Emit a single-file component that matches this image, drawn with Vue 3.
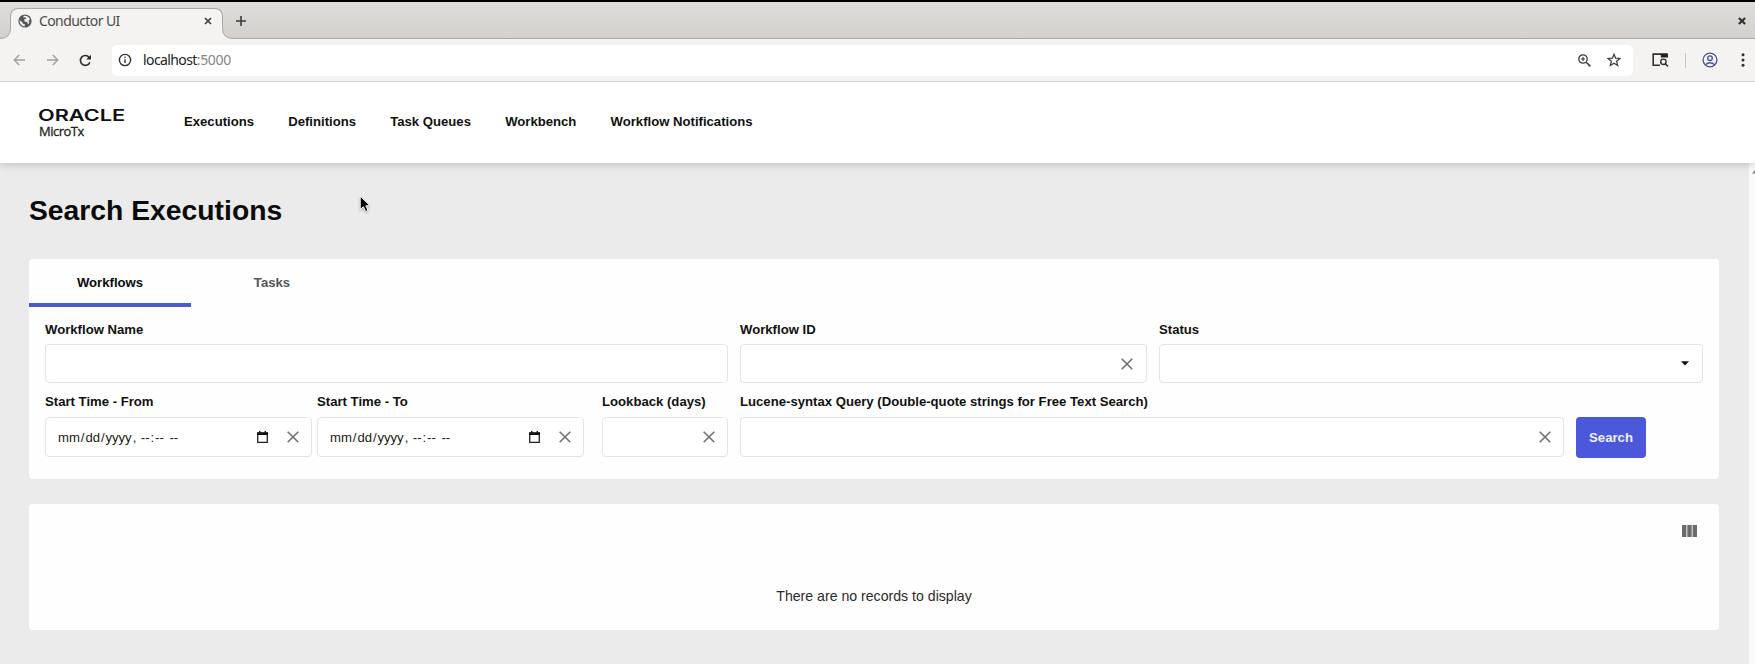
<script setup>
const navItems = ['Executions', 'Definitions', 'Task Queues', 'Workbench', 'Workflow Notifications']
const dateParts = ['mm', '/', 'dd', '/', 'yyyy', ', ', '--', ':', '--', ' ', '--']
const isField = (p) => /[mdy-]/.test(p)
const dateFields = [
  { id: 'from', label: 'Start Time - From' },
  { id: 'to', label: 'Start Time - To' },
]
</script>

<template>
  <div class="window">
    <div class="tabstrip">
      <div class="browser-tab">
        <svg class="globe" width="14" height="14" viewBox="0 0 14 14">
          <circle cx="7" cy="7" r="6.6" fill="#54575a" />
          <path d="M1.6 6.2 L4.3 8.3 L5 9.7 L6.8 10 L6.6 12.4 C3.6 12.2 1.4 9.6 1.6 6.2Z" fill="#f1f0ef" />
          <path d="M5.4 1.8 C8.4 1.2 11 2.6 12 5 L10.6 6.8 L11.4 8.4 L10 10.4 L9.2 8 L6.6 7.4 L6.2 5.6 L8.2 4.4 L7.4 3.2 L5.6 3.4Z" fill="#f1f0ef" />
        </svg>
        <span class="tab-title">Conductor UI</span>
        <svg class="tab-close" width="8" height="8" viewBox="0 0 8 8"><path d="M1 1 L7 7 M7 1 L1 7" stroke="#3f3f3f" stroke-width="1.7" /></svg>
      </div>
      <svg class="tab-curve left" width="11" height="11" viewBox="0 0 11 11"><path d="M0 11 V10.5 Q10.5 10.5 10.5 0 H11 V11Z" fill="#f4f3f2" /><path d="M0 10.5 Q10.5 10.5 10.5 0" fill="none" stroke="#aaa7a4" /></svg>
      <svg class="tab-curve right" width="11" height="11" viewBox="0 0 11 11"><path d="M11 11 V10.5 Q.5 10.5 .5 0 H0 V11Z" fill="#f4f3f2" /><path d="M11 10.5 Q.5 10.5 .5 0" fill="none" stroke="#aaa7a4" /></svg>
      <svg class="new-tab" width="10" height="10" viewBox="0 0 10 10"><path d="M5 0 V10 M0 5 H10" stroke="#3c3c3c" stroke-width="1.6" /></svg>
      <svg class="win-close" width="8" height="8" viewBox="0 0 8 8"><path d="M.9 .9 L7.1 7.1 M7.1 .9 L.9 7.1" stroke="#303030" stroke-width="2.1" /></svg>
    </div>

    <div class="toolbar">
      <div class="nav-buttons">
        <svg width="13" height="12" viewBox="0 0 13 12"><path d="M12 6 H1.5 M6.3 1 L1.3 6 L6.3 11" fill="none" stroke="#a09e9c" stroke-width="1.4" /></svg>
        <svg width="13" height="12" viewBox="0 0 13 12"><path d="M1 6 H11.5 M6.7 1 L11.7 6 L6.7 11" fill="none" stroke="#a09e9c" stroke-width="1.4" /></svg>
        <svg width="13" height="13" viewBox="0 0 13 13"><path d="M10.9 8.2 A4.9 4.9 0 1 1 10.2 3.4" fill="none" stroke="#2d2d2d" stroke-width="1.6" /><path d="M12 .8 V5.6 H7.2Z" fill="#2d2d2d" /></svg>
      </div>
      <div class="omnibox">
        <svg width="14" height="14" viewBox="0 0 14 14"><circle cx="7" cy="7" r="5.6" fill="none" stroke="#333" stroke-width="1.4" /><path d="M7 6.2 V10 M7 3.8 V5.1" stroke="#333" stroke-width="1.4" /></svg>
        <span class="url">localhost<span class="port">:5000</span></span>
        <svg class="magnifier" width="13" height="13" viewBox="0 0 13 13"><circle cx="5" cy="5" r="4.2" fill="none" stroke="#3c3c3c" stroke-width="1.3" /><path d="M8.2 8.2 L12.4 12.4" stroke="#3c3c3c" stroke-width="1.6" /><path d="M5 3 V7 M3 5 H7" stroke="#3c3c3c" stroke-width="1.2" /></svg>
        <svg width="14" height="14" viewBox="0 0 14 14"><path d="M7 1.3 L8.6 5.2 L12.9 5.5 L9.6 8.3 L10.7 12.5 L7 10.2 L3.3 12.5 L4.4 8.3 L1.1 5.5 L5.4 5.2Z" fill="none" stroke="#3c3c3c" stroke-width="1.25" /></svg>
      </div>
      <svg class="tab-search" width="17" height="14" viewBox="0 0 17 14"><path d="M8 12.2 H1.2 V1.1 H9" fill="none" stroke="#303030" stroke-width="1.6" /><path d="M8.8 .3 H15 Q16 .3 16 1.3 V4.4 H8.8Z" fill="#222" /><circle cx="11.4" cy="8.8" r="2.7" fill="none" stroke="#303030" stroke-width="1.4" /><path d="M13.3 10.7 L16 13.4" stroke="#303030" stroke-width="1.5" /></svg>
      <i class="divider"></i>
      <svg class="profile" width="16" height="16" viewBox="0 0 16 16"><g fill="none" stroke="#4a5299" stroke-width="1.35"><circle cx="8" cy="8" r="6.9" /><circle cx="8" cy="6.2" r="2.3" /><path d="M3.3 12.7 Q8 8.8 12.7 12.7" /></g></svg>
      <svg class="dots" width="4" height="14" viewBox="0 0 4 14"><g fill="#303030"><circle cx="2" cy="1.8" r="1.5" /><circle cx="2" cy="7" r="1.5" /><circle cx="2" cy="12.2" r="1.5" /></g></svg>
    </div>

    <header class="app-header">
      <div class="brand">
        <svg class="logo" width="92" height="20" viewBox="0 0 92 20"><text x="0" y="16.2" textLength="87" lengthAdjust="spacingAndGlyphs" class="oracle">ORACLE</text></svg>
        <span class="product">MicroTx</span>
      </div>
      <nav class="menu">
        <a v-for="item in navItems" :key="item">{{ item }}</a>
      </nav>
    </header>

    <div class="viewport">
      <main class="content">
        <h1>Search Executions</h1>

        <section class="panel search-panel">
          <div class="tabs">
            <div class="tab active">Workflows</div>
            <div class="tab">Tasks</div>
          </div>
          <div class="form-row">
            <div class="field name"><label>Workflow Name</label><div class="box"></div></div>
            <div class="field wf-id">
              <label>Workflow ID</label>
              <div class="box"><svg class="clear" width="12" height="12" viewBox="0 0 12 12"><path d="M.7 .7 L11.3 11.3 M11.3 .7 L.7 11.3" /></svg></div>
            </div>
            <div class="field status">
              <label>Status</label>
              <div class="box"><svg class="caret" width="8" height="5" viewBox="0 0 8 5"><path d="M0 .3 H8 L4 4.6Z" fill="#111" /></svg></div>
            </div>
          </div>
          <div class="form-row second">
            <div v-for="f in dateFields" :key="f.id" class="field date" :class="f.id">
              <label>{{ f.label }}</label>
              <div class="box">
                <span class="date-text"><span v-for="(p, i) in dateParts" :key="i" :class="{ part: isField(p) }">{{ p }}</span></span>
                <svg class="calendar" width="11" height="12" viewBox="0 0 11 12"><path d="M.7 2.4 H10.3 V11.3 H.7Z" fill="none" stroke="#222" stroke-width="1.3" /><path d="M0 1.2 H11 V4 H0Z M2 0 H3.4 V2 H2Z M7.6 0 H9 V2 H7.6Z" fill="#111" /></svg>
                <svg class="clear" width="12" height="12" viewBox="0 0 12 12"><path d="M.7 .7 L11.3 11.3 M11.3 .7 L.7 11.3" /></svg>
              </div>
            </div>
            <div class="field lookback">
              <label>Lookback (days)</label>
              <div class="box"><svg class="clear" width="12" height="12" viewBox="0 0 12 12"><path d="M.7 .7 L11.3 11.3 M11.3 .7 L.7 11.3" /></svg></div>
            </div>
            <div class="field query">
              <label>Lucene-syntax Query (Double-quote strings for Free Text Search)</label>
              <div class="box"><svg class="clear" width="12" height="12" viewBox="0 0 12 12"><path d="M.7 .7 L11.3 11.3 M11.3 .7 L.7 11.3" /></svg></div>
            </div>
            <button class="search-btn">Search</button>
          </div>
        </section>

        <section class="panel results">
          <svg class="columns" width="15" height="12" viewBox="0 0 15 12"><path d="M0 0 H4.4 V12 H0Z M5.3 0 H9.7 V12 H5.3Z M10.6 0 H15 V12 H10.6Z" fill="#6b6b6b" /></svg>
          <p>There are no records to display</p>
        </section>
      </main>
      <div class="scrollbar"><svg width="5" height="5" viewBox="0 0 5 5"><path d="M1 4.5 L4.5 .5 H5 V4.5Z" fill="#777" /></svg></div>
    </div>

    <svg class="cursor" width="13" height="20" viewBox="0 0 13 20"><path d="M1.2 1 V14.6 L4.4 11.7 L6.6 16.6 L9 15.5 L6.8 10.8 H11Z" fill="#000" stroke="#fff" stroke-width="1" /></svg>
  </div>
</template>

<style>
body { margin: 0; overflow: hidden; }
</style>

<style scoped>
* { box-sizing: border-box; }
svg { display: block; flex: none; }
.window {
  position: relative;
  display: flex;
  flex-direction: column;
  width: 1755px;
  height: 664px;
  overflow: hidden;
  border-top: 2px solid #000;
  background: #ebebeb;
  font-family: "Liberation Sans", Arial, sans-serif;
  color: #111;
}
.tabstrip {
  position: relative;
  display: flex;
  align-items: flex-start;
  flex: none;
  height: 37px;
  padding-left: 10px;
  background: linear-gradient(#dfddda, #d3d0cd);
  border-bottom: 1px solid #aaa7a4;
}
.browser-tab {
  display: flex;
  align-items: center;
  width: 213px;
  height: 31px;
  margin-top: 6px;
  padding: 0 10px 7px 7px;
  border: 1px solid #aaa7a4;
  border-bottom: 0;
  border-radius: 8px 8px 0 0;
  background: #f4f3f2;
}
.tab-title {
  margin-left: 7px;
  font: 14px/20px "Noto Sans", sans-serif;
  letter-spacing: -0.6px;
  color: #4b4b4b;
}
.tab-close { margin-left: auto; }
.tab-curve { position: absolute; top: 26px; }
.tab-curve.left { left: 0; }
.tab-curve.right { left: 222px; }
.new-tab { margin: 14px 0 0 13px; }
.win-close { margin: 15px 9px 0 auto; }
.toolbar {
  position: relative;
  z-index: 2;
  display: flex;
  align-items: center;
  flex: none;
  height: 43px;
  padding: 0 10px 0 13px;
  background: #f4f3f2;
  border-bottom: 1px solid #d2d1d0;
}
.nav-buttons { display: flex; align-items: center; gap: 20px; }
.omnibox {
  display: flex;
  align-items: center;
  width: 1521px;
  height: 31px;
  margin-left: 20px;
  padding: 0 12px 0 6px;
  border-radius: 5px;
  background: #fff;
}
.url {
  margin-left: 11px;
  font: 14px/20px "Noto Sans", sans-serif;
  letter-spacing: -0.6px;
  color: #222;
}
.port { color: #858585; letter-spacing: -0.35px; }
.magnifier { margin: 0 16px 0 auto; }
.tab-search { margin-left: 19px; }
.divider { width: 1px; height: 15px; margin-left: 16px; background: #c6c5c4; }
.profile { margin-left: 16px; }
.dots { margin-left: auto; }
.app-header {
  position: relative;
  z-index: 1;
  display: flex;
  flex: none;
  height: 81px;
  padding-left: 39px;
  background: #fff;
  box-shadow: 0 1px 9px rgba(0, 0, 0, 0.22);
}
.brand { width: 145px; padding-top: 23px; }
.logo { margin-left: -1px; }
.oracle { font: 600 15.9px Inter, sans-serif; fill: #111; }
.product {
  display: block;
  margin-top: -2px;
  font: 13px/16px "Open Sans", sans-serif;
  letter-spacing: -0.5px;
  -webkit-text-stroke: 0.3px #222;
  color: #222;
}
.menu {
  display: flex;
  gap: 34.2px;
  padding-top: 32px;
  font-size: 13.13px;
  font-weight: 700;
  line-height: 16px;
  white-space: nowrap;
}
.viewport { display: flex; flex: 1; }
.content { flex: 1; padding: 31px 30px 0 29px; }
h1 { margin: 0 0 33px; font-size: 28.3px; line-height: 32px; color: #0b0b0b; }
.panel { background: #fefefe; border-radius: 4px; }
.search-panel { height: 220px; }
.tabs { display: flex; height: 48px; font-size: 13.15px; font-weight: 700; }
.tab {
  width: 162px;
  padding-top: 16px;
  border-bottom: 4px solid transparent;
  line-height: 16px;
  text-align: center;
  color: #555;
}
.tab.active { color: #0b0b0b; border-bottom-color: #4c59d0; }
.form-row { display: flex; padding: 15px 0 0 16px; }
.form-row.second { padding-top: 11px; align-items: flex-end; }
.field label {
  display: block;
  margin-bottom: 6px;
  font-size: 13.15px;
  font-weight: 700;
  line-height: 16px;
  white-space: nowrap;
}
.second .field label { margin-bottom: 7px; }
.box {
  display: flex;
  align-items: center;
  height: 39px;
  padding: 0 12px;
  border: 1px solid #e4e4e4;
  border-radius: 4px;
  background: #fff;
}
.second .box { height: 40px; padding-left: 11px; }
.name { width: 683px; margin-right: 12px; }
.wf-id { width: 407px; margin-right: 12px; }
.wf-id .box, .status .box { padding-right: 13px; }
.status { width: 544px; }
.date { width: 267px; }
.from { margin-right: 5px; }
.to { margin-right: 18px; }
.lookback { width: 126px; margin-right: 12px; }
.query { width: 824px; margin-right: 12px; }
.clear { margin-left: auto; fill: none; stroke: #707070; stroke-width: 1.6; }
.caret { margin-left: auto; }
.date-text { font-size: 13.15px; letter-spacing: -0.05px; white-space: pre; color: #222; }
.part { padding: 0 1px; }
.calendar { margin-left: auto; }
.date .clear { margin-left: 19px; }
.search-btn {
  width: 70px;
  height: 41px;
  margin-bottom: -1px;
  padding: 0 0 1px;
  border: 0;
  border-radius: 4px;
  background: #4a58d9;
  font: 700 13.15px "Liberation Sans", Arial, sans-serif;
  color: #f1f2fd;
}
.results { height: 126px; margin-top: 25px; padding: 21px 22px 0 0; }
.columns { margin-left: auto; }
.results p {
  margin: 50px -22px 0 0;
  font-size: 14.13px;
  line-height: 18px;
  text-align: center;
  color: #2b2b2b;
}
.scrollbar { width: 6px; padding: 6px 0 0 2px; overflow: hidden; background: #fafafa; }
.cursor { position: absolute; left: 359px; top: 193px; filter: drop-shadow(0 1px 1px rgba(0, 0, 0, 0.3)); }
</style>
